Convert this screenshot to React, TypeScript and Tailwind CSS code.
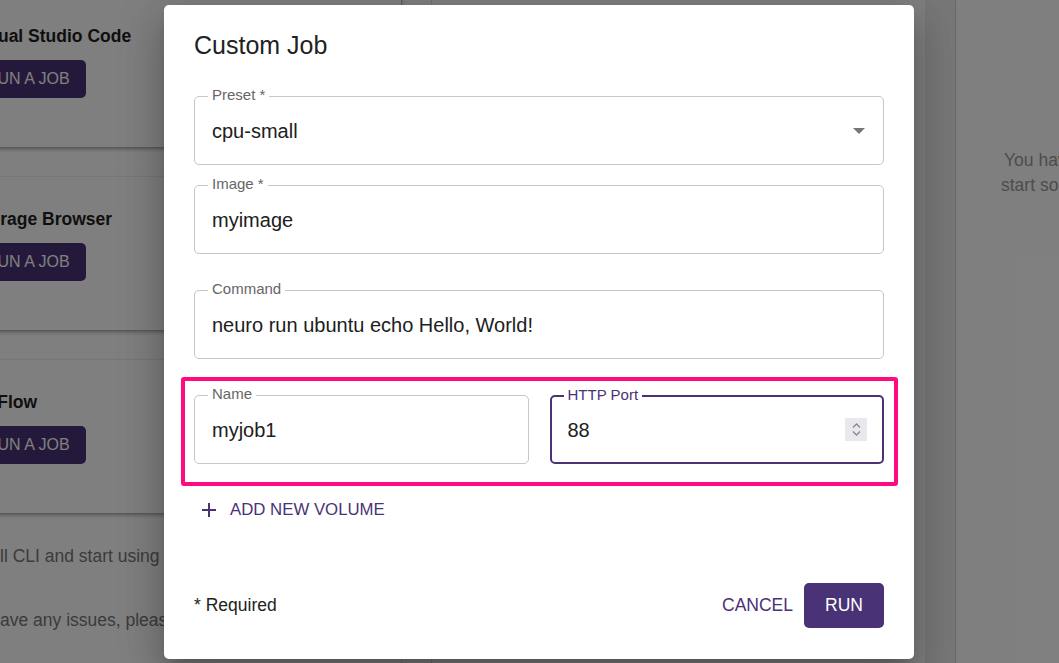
import React from "react";

const PURPLE = "#4a3276";

function Field({
  label,
  value,
  focused,
  right,
}: {
  label: string;
  value: string;
  focused?: boolean;
  right?: React.ReactNode;
}) {
  return (
    <div
      className={
        "relative flex h-[69px] items-center rounded-[5px] " +
        (focused ? "border-2 border-[#4a3276] pl-[16px] pr-[15px]" : "border border-[#c6c6c6] pl-[17px] pr-[17px]")
      }
    >
      <span
        className={
          "absolute top-[-2px] -translate-y-1/2 bg-white px-[4px] text-[15px] leading-[18px] " +
          (focused ? "left-[12px] text-[#4a3276]" : "left-[13px] text-[#666]")
        }
      >
        {label}
      </span>
      <span className="flex-1 text-[20px] leading-[24px] text-[#202020]">{value}</span>
      {right}
    </div>
  );
}

function Card({ title, first }: { title: string; first?: boolean }) {
  return (
    <div
      className={
        "h-[153px] bg-white px-[16px] pt-[30px] shadow-[0_2px_4px_rgba(0,0,0,0.35),0_0_1px_rgba(0,0,0,0.2)] " +
        (first ? "mt-[-6px]" : "mt-[30px]")
      }
    >
      <div className="text-[17.5px] font-bold leading-[24px] text-[#1e1e1e]">{title}</div>
      <button className="mt-[12px] flex h-[38px] items-center rounded-[5px] bg-[#4a3276] pl-[14px] pr-[16px] text-[16px] text-white">
        RUN A JOB
      </button>
    </div>
  );
}

export default function App() {
  return (
    <div className="relative h-[663px] w-[1059px] overflow-hidden bg-white font-['Liberation_Sans',Arial,sans-serif]">
      {/* background page */}
      <div className="flex h-full">
        <div className="ml-[-44px] flex w-[446px] shrink-0 flex-col border-r border-[#e0e0e0] px-[16px]">
          <div className="mx-[-16px]">
            <Card title="Visual Studio Code" first />
            <Card title="Storage Browser" />
            <Card title="MLFlow" />
          </div>
          <p className="ml-[28px] mt-[31px] whitespace-nowrap text-[17.5px] leading-[24px] text-[#777]">
            ll CLI and start using Neuro Platform
          </p>
          <p className="ml-[28px] mt-[40px] whitespace-nowrap text-[17.5px] leading-[24px] text-[#777]">
            ave any issues, please contact us
          </p>
        </div>
        <div className="w-[30px] shrink-0 border-r border-[#e0e0e0]" />
        <div className="flex-1" />
        <div className="w-[30px] shrink-0 bg-[#eeeeee]" />
        <div className="w-[104px] shrink-0 border-l border-[#d0d0d0] pt-[148px]">
          <div className="ml-[48px] whitespace-nowrap text-[17.5px] leading-[25px] text-[#9a9a9a]">You have no jobs</div>
          <div className="ml-[45px] whitespace-nowrap text-[17.5px] leading-[25px] text-[#9a9a9a]">start something</div>
        </div>
      </div>

      {/* backdrop */}
      <div className="absolute inset-0 bg-black/50" />

      {/* dialog */}
      <div className="absolute left-[164px] top-[5px] flex h-[654px] w-[750px] flex-col rounded-[5px] bg-white px-[30px] pb-[31px] pt-[24px] shadow-[0_11px_15px_-7px_rgba(0,0,0,0.2),0_24px_38px_3px_rgba(0,0,0,0.14),0_9px_46px_8px_rgba(0,0,0,0.12)]">
        <h2 className="text-[25px] leading-[32px] text-[#222]">Custom Job</h2>

        <div className="mt-[35px]">
          <Field
            label="Preset *"
            value="cpu-small"
            right={
              <svg width="12" height="6" viewBox="0 0 12 6" className="mr-[1px]">
                <path d="M0 0h12L6 6z" fill="#767676" />
              </svg>
            }
          />
        </div>
        <div className="mt-[20px]">
          <Field label="Image *" value="myimage" />
        </div>
        <div className="mt-[36px]">
          <Field label="Command" value="neuro run ubuntu echo Hello, World!" />
        </div>

        <div className="ml-[-13px] mr-[-14px] mt-[18px] rounded-[3px] border-4 border-[#ff0a80] pb-[18px] pl-[9px] pr-[10px] pt-[14px]">
          <div className="grid grid-cols-2 gap-[21px]">
            <Field label="Name" value="myjob1" />
            <Field
              label="HTTP Port"
              value="88"
              focused
              right={
                <div className="flex h-[23px] w-[22px] flex-col items-center justify-center gap-[3px] bg-[#e9e8ee]">
                  <svg width="9" height="5" viewBox="0 0 9 5">
                    <path d="M1 4.5L4.5 1L8 4.5" fill="none" stroke="#8a8a8a" strokeWidth="1.4" />
                  </svg>
                  <svg width="9" height="5" viewBox="0 0 9 5">
                    <path d="M1 0.5L4.5 4L8 0.5" fill="none" stroke="#8a8a8a" strokeWidth="1.4" />
                  </svg>
                </div>
              }
            />
          </div>
        </div>

        <button className="ml-[8px] mt-[12px] flex h-[24px] items-center self-start text-[16.8px] text-[#4a3276]">
          <svg width="14" height="14" viewBox="0 0 14 14" className="mr-[14px]">
            <path d="M7 0v14M0 7h14" stroke={PURPLE} strokeWidth="2" />
          </svg>
          ADD NEW VOLUME
        </button>

        <div className="mt-auto flex items-center justify-between">
          <span className="text-[17.5px] text-[#222]">* Required</span>
          <div className="flex items-center">
            <button className="mr-[11px] text-[17.5px] text-[#4a3276]">CANCEL</button>
            <button className="flex h-[45px] w-[80px] items-center justify-center rounded-[5px] bg-[#4a3276] text-[17.5px] text-white">
              RUN
            </button>
          </div>
        </div>
      </div>
    </div>
  );
}
